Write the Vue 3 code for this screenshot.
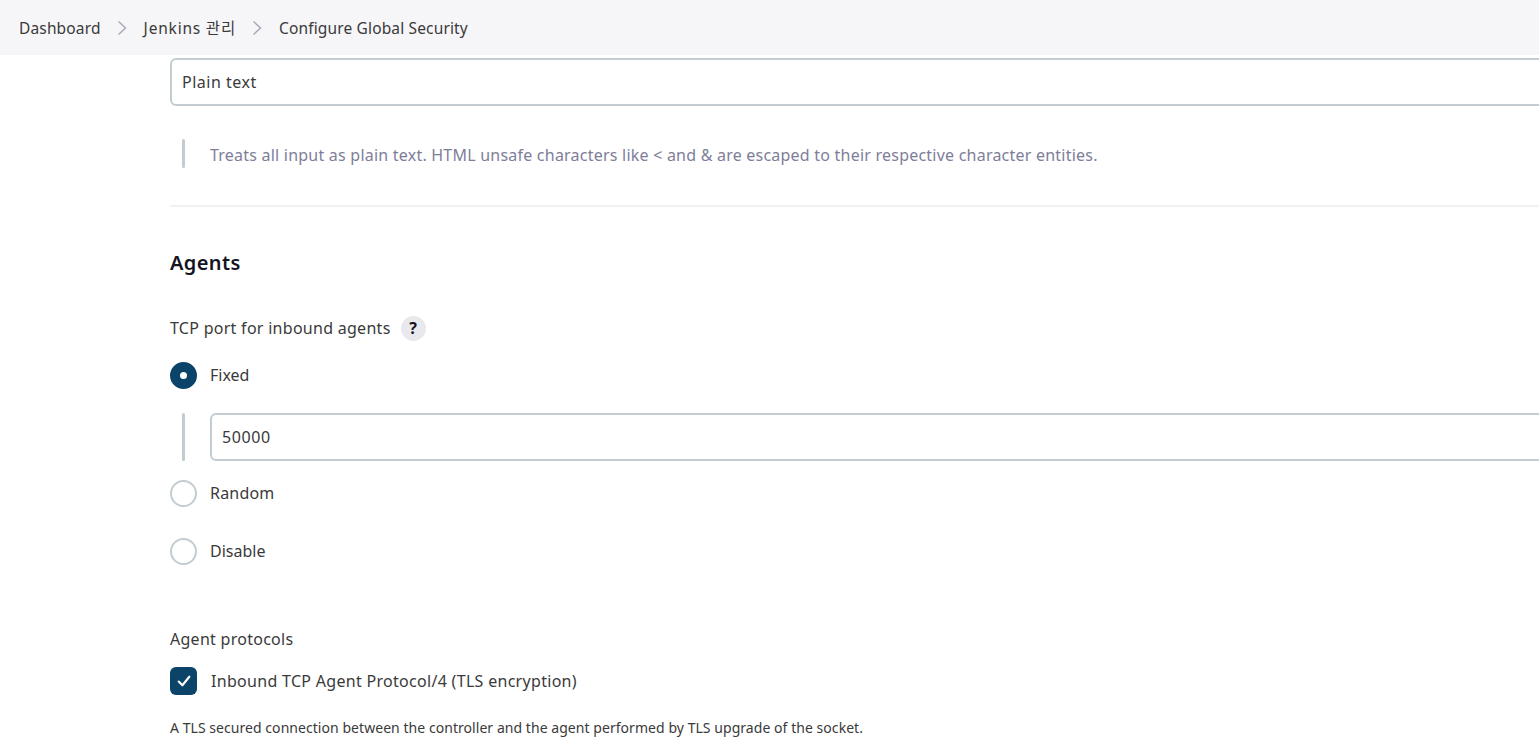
<script setup>
const crumbs = ['Dashboard', 'Jenkins 관리', 'Configure Global Security']
const ports = [
  { label: 'Random', cls: 'random' },
  { label: 'Disable', cls: 'disable' },
]
</script>

<template>
  <div class="page">
    <nav class="crumbs">
      <template v-for="(c, i) in crumbs" :key="c">
        <span class="crumb">{{ c }}</span>
        <svg v-if="i < crumbs.length - 1" class="chev" width="10" height="16" viewBox="0 0 10 16">
          <path d="M1.5 1.5 8.5 8 1.5 14.5" fill="none" stroke="#a9a9b8" stroke-width="1.5" />
        </svg>
      </template>
    </nav>
    <main class="content">
      <div class="field top">Plain text</div>
      <div class="note">
        <span class="bar"></span>
        <p>Treats all input as plain text. HTML unsafe characters like &lt; and &amp; are escaped to their respective character entities.</p>
      </div>
      <hr class="rule" />
      <h2>Agents</h2>
      <div class="label">
        <span>TCP port for inbound agents</span>
        <span class="help">?</span>
      </div>
      <div class="radio fixed">
        <span class="dot on"></span>
        <span>Fixed</span>
      </div>
      <div class="nested">
        <span class="nbar"></span>
        <div class="field num">50000</div>
      </div>
      <div v-for="p in ports" :key="p.label" class="radio" :class="p.cls">
        <span class="dot"></span>
        <span>{{ p.label }}</span>
      </div>
      <div class="protocols">Agent protocols</div>
      <div class="check">
        <span class="box">
          <svg width="16" height="16" viewBox="0 0 15 15">
            <path d="M2.5 8 6 11.5 12.5 3.5" fill="none" stroke="#fff" stroke-width="2" stroke-linecap="round" stroke-linejoin="round" />
          </svg>
        </span>
        <span>Inbound TCP Agent Protocol/4 (TLS encryption)</span>
      </div>
      <p class="desc">A TLS secured connection between the controller and the agent performed by TLS upgrade of the socket.</p>
    </main>
  </div>
</template>

<style>
html, body { margin: 0; overflow: hidden; background: #fff; }
</style>

<style scoped>
.page {
  width: 1539px;
  height: 756px;
  overflow: hidden;
  font-family: "Noto Sans", "Noto Sans CJK KR", sans-serif;
  font-size: 16px;
  color: #3a3a3a;
}
.crumbs {
  height: 55px;
  background: #f6f6f8;
  display: flex;
  align-items: center;
  padding-left: 19px;
  box-sizing: border-box;
  font-size: 15.5px;
  letter-spacing: 0.15px;
  color: #3a3a3a;
}
.crumb:nth-of-type(2) { letter-spacing: 0.8px; }
.chev { margin: 0 17px 0 16px; }
.content {
  padding-left: 170px;
  width: 1600px;
  box-sizing: border-box;
}
.field {
  height: 48px;
  box-sizing: border-box;
  border: 2px solid #c3ccd1;
  border-radius: 6px;
  padding-left: 10px;
  display: flex;
  align-items: center;
  flex: 1;
  letter-spacing: 0.5px;
}
.num { letter-spacing: 0.6px; }
.top { margin-top: 3px; }
.note {
  margin-top: 33px;
  height: 29px;
  display: flex;
  align-items: center;
  padding-left: 12px;
}
.bar, .nbar {
  width: 3px;
  background: #c3ccd1;
  border-radius: 2px;
  align-self: stretch;
  flex: none;
}
.note p {
  margin: 2px 0 0 25px;
  color: #7e7e99;
  letter-spacing: 0.223px;
}
.rule {
  margin: 37px 0 0;
  border: 0;
  height: 2px;
  background: #f0f1f2;
}
h2 {
  margin: 43px 0 0;
  font-size: 20px;
  line-height: 26px;
  font-weight: 600;
  letter-spacing: 0.4px;
  color: #14141f;
}
.label {
  margin-top: 39px;
  height: 26px;
  display: flex;
  align-items: center;
  gap: 10px;
  letter-spacing: 0.28px;
}
.help {
  width: 25px;
  height: 25px;
  border-radius: 50%;
  background: #e9e9ed;
  color: #14141f;
  font-size: 16px;
  font-weight: 700;
  letter-spacing: 0;
  display: flex;
  align-items: center;
  justify-content: center;
}
.radio {
  display: flex;
  align-items: center;
  height: 28px;
  gap: 13px;
}
.fixed { margin-top: 20px; }
.random { margin-top: 18px; letter-spacing: 0.2px; }
.disable { margin-top: 30px; }
.dot {
  width: 27px;
  height: 27px;
  box-sizing: border-box;
  border-radius: 50%;
  border: 2px solid #c3ccd1;
  flex: none;
  display: flex;
  align-items: center;
  justify-content: center;
}
.dot.on {
  background: #0b4468;
  border-color: #0b4468;
}
.dot.on::after {
  content: "";
  width: 7px;
  height: 7px;
  border-radius: 50%;
  background: #fff;
}
.nested {
  margin-top: 24px;
  height: 48px;
  display: flex;
  padding-left: 12px;
}
.nested .field { margin-left: 25px; }
.protocols {
  margin-top: 61px;
  height: 26px;
  line-height: 26px;
  letter-spacing: 0.27px;
}
.check {
  margin-top: 15px;
  height: 28px;
  display: flex;
  align-items: center;
  gap: 14px;
  letter-spacing: 0.3px;
}
.box {
  width: 27px;
  height: 28px;
  border-radius: 6px;
  background: #0b4468;
  display: flex;
  align-items: center;
  justify-content: center;
  flex: none;
}
.desc {
  margin: 22px 0 0;
  font-size: 14px;
  line-height: 22px;
  letter-spacing: 0.05px;
}
</style>
